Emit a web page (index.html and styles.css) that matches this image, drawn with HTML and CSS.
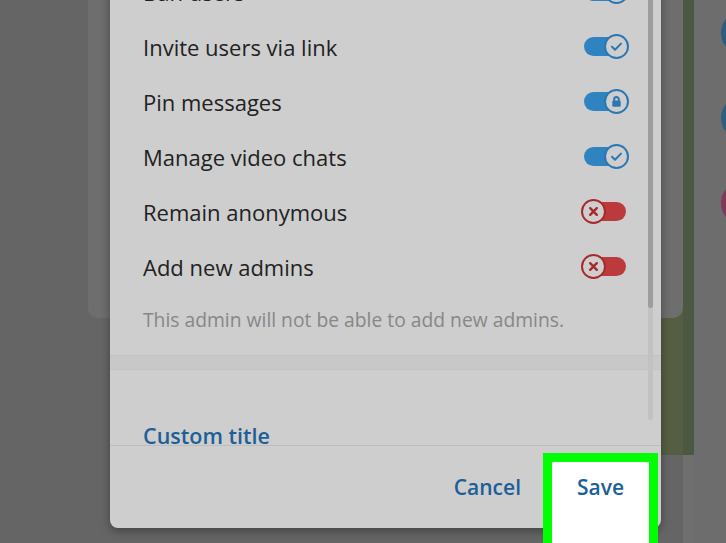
FILE: index.html
```html
<!DOCTYPE html>
<html lang="en">
<head>
    <meta charset="UTF-8">
    <title>Admin rights</title>
    <link rel="stylesheet" href="styles.css">
</head>
<body>
    <div class="scene">
        <div class="chat">
            <div class="card-behind"></div>
        </div>
        <div class="wall"></div>
        <div class="side">
            <span class="avatar a1"></span>
            <span class="avatar a2"></span>
            <span class="avatar a3"></span>
        </div>
    </div>

    <div class="dialog">
        <div class="scroll">
            <div class="row">
                <span>Ban users</span>
                <span class="toggle on"><span class="knob"><svg viewBox="0 0 21 21"><path d="M6 10.8l3 3 6-6.2"/></svg></span></span>
            </div>
            <div class="row">
                <span>Invite users via link</span>
                <span class="toggle on"><span class="knob"><svg viewBox="0 0 21 21"><path d="M6 10.8l3 3 6-6.2"/></svg></span></span>
            </div>
            <div class="row">
                <span>Pin messages</span>
                <span class="toggle on"><span class="knob"><svg viewBox="0 0 21 21"><rect class="fill" x="6.3" y="9.6" width="8.4" height="6.2" rx="1.2"/><path d="M8.2 9.8V8.4a2.3 2.3 0 0 1 4.6 0v1.4"/></svg></span></span>
            </div>
            <div class="row">
                <span>Manage video chats</span>
                <span class="toggle on"><span class="knob"><svg viewBox="0 0 21 21"><path d="M6 10.8l3 3 6-6.2"/></svg></span></span>
            </div>
            <div class="row">
                <span>Remain anonymous</span>
                <span class="toggle off"><span class="knob"><svg viewBox="0 0 21 21"><path d="M7.2 7.2l6.6 6.6M13.8 7.2l-6.6 6.6"/></svg></span></span>
            </div>
            <div class="row">
                <span>Add new admins</span>
                <span class="toggle off"><span class="knob"><svg viewBox="0 0 21 21"><path d="M7.2 7.2l6.6 6.6M13.8 7.2l-6.6 6.6"/></svg></span></span>
            </div>

            <p class="hint">This admin will not be able to add new admins.</p>

            <div class="band"></div>

            <div class="custom">Custom title</div>

            <div class="scrollbar"><div class="thumb"></div></div>
        </div>

        <div class="footer">
            <button class="btn">Cancel</button>
            <button class="btn save">Save</button>
        </div>
    </div>
</body>
</html>
```

FILE: styles.css
```css
body {
    margin: 0;
    background-color: #656565;
    font-family: "Open Sans", "DejaVu Sans", sans-serif;
    overflow: hidden;
}
.scene {
    display: flex;
    height: 543px;
}
.chat {
    flex: none;
    width: 683px;
    background-color: #656565;
    background-image: linear-gradient(to right, transparent 661px, #555e43 661px);
    background-size: 100% 455px;
    background-repeat: no-repeat;
}
.card-behind {
    margin-left: 88px;
    height: 318px;
    background-color: #6e6e6e;
    border-radius: 0 0 10px 10px;
}
.wall {
    flex: none;
    width: 11px;
    background: linear-gradient(to bottom, #4c5841 455px, #6f6f6f 455px);
}
.side {
    flex: 1;
    min-width: 0;
    overflow: hidden;
    background-color: #6d6d6d;
    display: flex;
    flex-direction: column;
    gap: 41px;
    padding: 11px 0 0 27px;
}
.avatar {
    display: block;
    flex: none;
    width: 44px;
    height: 44px;
    border-radius: 50%;
}
.a1 { background-color: #2b5d82; }
.a2 { background-color: #2a6080; }
.a3 { background-color: #83385a; }

.dialog {
    position: absolute;
    left: 110px;
    top: -36px;
    width: 551px;
    height: 564px;
    background-color: #cecece;
    border-radius: 0 0 8px 8px;
    box-shadow: 0 3px 10px rgba(0, 0, 0, 0.35);
    display: flex;
    flex-direction: column;
}
.scroll {
    flex: none;
    position: relative;
    height: 481px;
    overflow: hidden;
    padding: 0 32px 0 33px;
}
.row {
    height: 55px;
    display: flex;
    align-items: center;
    justify-content: space-between;
    font-size: 22px;
    color: #222;
}
.toggle {
    position: relative;
    width: 45px;
    height: 25px;
}
.toggle::before {
    content: "";
    position: absolute;
    top: 3px;
    height: 19px;
    border-radius: 10px;
}
.toggle.on::before {
    left: 0;
    right: 8px;
    background-color: #2f83c1;
}
.toggle.off {
    margin-right: 3px;
}
.toggle.off::before {
    left: 8px;
    right: 0;
    background-color: #bd3a3c;
}
.knob {
    position: absolute;
    top: 0;
    width: 25px;
    height: 25px;
    box-sizing: border-box;
    border-radius: 50%;
    background-color: #cecece;
    border: 2px solid #2a78b3;
}
.knob svg {
    display: block;
    width: 21px;
    height: 21px;
    fill: none;
    stroke-width: 2;
    stroke-linecap: round;
    stroke-linejoin: round;
}
.on .knob {
    right: 0;
}
.on .knob svg {
    stroke: #2a78b3;
}
.on .knob .fill {
    fill: #2a78b3;
    stroke: none;
}
.off .knob {
    left: 0;
    border-color: #a8292d;
}
.off .knob svg {
    stroke: #a8292d;
    stroke-width: 2.4;
}
.hint {
    margin: 14px 0 0;
    line-height: 24px;
    font-size: 19.3px;
    color: #878787;
}
.band {
    margin: 23px -33px 0;
    height: 13px;
    background-color: #c8c8c8;
    border-top: 1px solid #c1c1c1;
    border-bottom: 1px solid #c3c3c3;
}
.custom {
    margin-top: 52px;
    line-height: 28px;
    font-size: 21.5px;
    font-weight: 600;
    color: #1d5f97;
}
.scrollbar {
    position: absolute;
    top: 0;
    right: 8px;
    width: 5px;
    height: 456px;
    border-radius: 3px;
    background-color: #c2c2c2;
}
.thumb {
    height: 344px;
    border-radius: 3px;
    background-color: #9d9d9d;
}
.footer {
    flex: none;
    height: 82px;
    border-top: 1px solid #bdbdbd;
    display: flex;
    justify-content: flex-end;
    align-items: flex-start;
    padding: 7px 3px 0 0;
}
.btn {
    font-family: inherit;
    font-size: 21px;
    font-weight: 600;
    line-height: 28px;
    color: #1d5f97;
    background: none;
    border: none;
    padding: 0;
    margin: 20px 22px 0 0;
}
.save {
    flex: none;
    box-sizing: border-box;
    width: 115px;
    height: 100px;
    margin: 0;
    padding-top: 11px;
    display: flex;
    justify-content: center;
    align-items: flex-start;
    background-color: #fff;
    border: 9px solid #00ff00;
}
```
